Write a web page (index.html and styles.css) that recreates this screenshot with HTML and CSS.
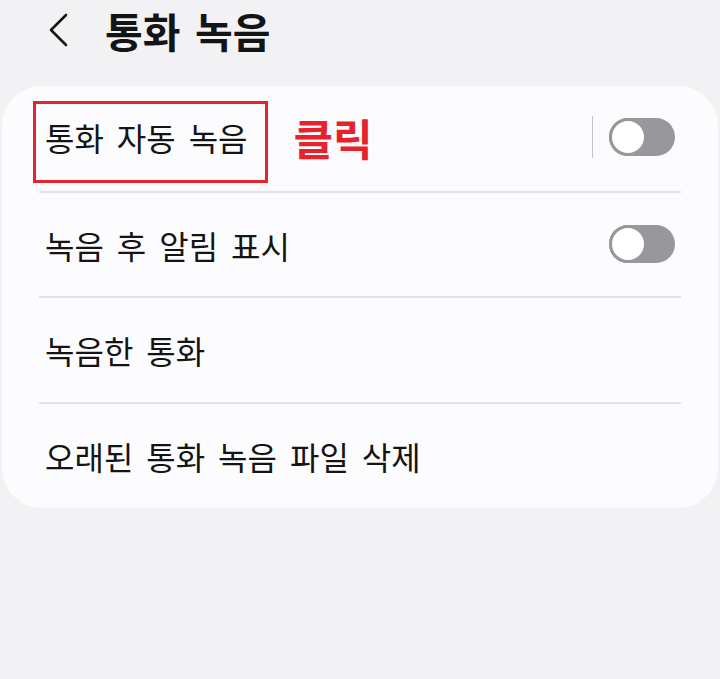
FILE: index.html
```html
<!DOCTYPE html>
<html lang="ko">
<head>
<meta charset="utf-8">
<title>통화 녹음</title>
<link rel="stylesheet" href="styles.css">
</head>
<body>
<header class="topbar">
  <span class="back" aria-label="뒤로">
    <svg width="24" height="34" viewBox="0 0 24 34"><path d="M20 2 L5 17 L20 32" fill="none" stroke="#141414" stroke-width="2.6" stroke-linecap="round" stroke-linejoin="round"/></svg>
  </span>
  <h1 class="title">통화 녹음</h1>
</header>
<main class="card">
  <div class="row first">
    <span class="label">통화 자동 녹음</span>
    <span class="note">클릭</span>
    <span class="sep"></span>
    <span class="toggle"><span class="knob"></span></span>
  </div>
  <div class="row">
    <span class="label">녹음 후 알림 표시</span>
    <span class="toggle"><span class="knob"></span></span>
  </div>
  <div class="row tall">
    <span class="label">녹음한 통화</span>
  </div>
  <div class="row last">
    <span class="label">오래된 통화 녹음 파일 삭제</span>
  </div>
  <div class="highlight"></div>
</main>
</body>
</html>
```

FILE: styles.css
```css
html, body {
  margin: 0;
  padding: 0;
  background: #f2f2f4;
  font-family: "Noto Sans CJK KR", "Noto Sans", sans-serif;
  color: #141414;
}

.topbar {
  height: 86px;
  display: flex;
  align-items: center;
  padding-left: 46px;
  box-sizing: border-box;
  padding-bottom: 26px;
}

.back {
  display: flex;
  width: 24px;
  height: 34px;
  margin-right: 35px;
}

.title {
  margin: 0;
  font-size: 41px;
  font-weight: 700;
  word-spacing: 3px;
  line-height: 1;
}

.card {
  position: relative;
  margin: 0 2px;
  background: #fcfcfe;
  border-radius: 40px;
  padding: 0;
}

.row {
  height: 105px;
  margin: 0 37px;
  padding: 0 6px 0 6px;
  display: flex;
  align-items: center;
  border-bottom: 2px solid #e3e3e5;
  box-sizing: border-box;
}

.row.first {
  height: 107px;
  padding-bottom: 3px;
}

.row.tall {
  height: 106px;
}

.row.last {
  border-bottom: none;
  height: 104px;
}

.label {
  font-size: 32px;
  word-spacing: 4px;
  line-height: 1;
}

.note {
  margin-left: 46px;
  font-size: 43px;
  font-weight: 700;
  color: #e8222d;
  line-height: 1;
}

.sep {
  margin-left: auto;
  width: 1.5px;
  height: 42px;
  background: #c4c4c6;
  margin-right: 16px;
}

.toggle {
  margin-left: auto;
  width: 66px;
  height: 38px;
  border-radius: 19px;
  background: #98989c;
  position: relative;
  margin-bottom: 1px;
}

.sep + .toggle {
  margin-left: 0;
}

.knob {
  position: absolute;
  left: 0;
  top: 0;
  width: 38px;
  height: 38px;
  border-radius: 50%;
  box-sizing: border-box;
  border: 3.5px solid #98989c;
  background: #ffffff;
}

.highlight {
  position: absolute;
  left: 31px;
  top: 15px;
  width: 235px;
  height: 82px;
  border: 3px solid #e8222d;
  box-sizing: border-box;
}
```
